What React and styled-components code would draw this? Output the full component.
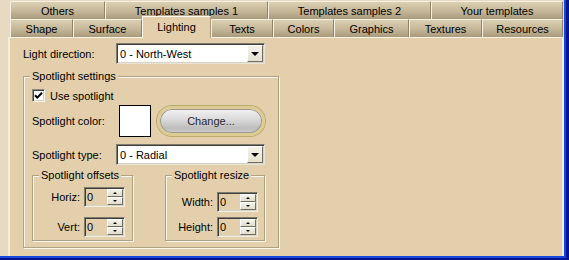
import React from 'react';
import styled, { createGlobalStyle } from 'styled-components';

const PANEL = '#E3CFAB';

const GlobalStyle = createGlobalStyle`
  html, body {
    margin: 0;
    padding: 0;
    background: #E7DAC0;
  }
  body {
    font-family: "Liberation Sans", Arial, sans-serif;
    font-size: 11px;
    color: #000;
  }
`;

const topTabs = [
    { label: 'Others', w: 95 },
    { label: 'Templates samples 1', w: 163 },
    { label: 'Templates samples 2', w: 163 },
    { label: 'Your templates', w: 132 },
];

const bottomTabs = [
    { label: 'Shape', w: 63 },
    { label: 'Surface', w: 69 },
    { label: 'Lighting', w: 69, active: true },
    { label: 'Texts', w: 62 },
    { label: 'Colors', w: 61 },
    { label: 'Graphics', w: 75 },
    { label: 'Textures', w: 73 },
    { label: 'Resources', w: 81 },
];

function Combo({ value }) {
    return (
        <ComboBox>
            <ComboText>{value}</ComboText>
            <DropButton><Arrow $down /></DropButton>
        </ComboBox>
    );
}

function Spin({ label, value }) {
    return (
        <>
            <SpinLabel>{label}</SpinLabel>
            <SpinBox>
                <SpinText>{value}</SpinText>
                <SpinButtons>
                    <SpinButton><SmallArrow /></SpinButton>
                    <SpinButton><SmallArrow $down /></SpinButton>
                </SpinButtons>
            </SpinBox>
        </>
    );
}

export default function App() {
    return (
        <>
            <GlobalStyle />
            <Frame>
                <Client>
                    <TabRow>
                        {topTabs.map(t => <Tab key={t.label} $w={t.w}>{t.label}</Tab>)}
                    </TabRow>
                    <TabRow>
                        {bottomTabs.map(t => <Tab key={t.label} $w={t.w} $active={t.active}>{t.label}</Tab>)}
                    </TabRow>
                    <Panel>
                        <FieldRow>
                            <Label $w={93}>Light direction:</Label>
                            <Combo value="0 - North-West" />
                        </FieldRow>

                        <GroupBox $w={256} $h={172} $top={12}>
                            <GroupTitle>Spotlight settings</GroupTitle>
                            <CheckRow>
                                <CheckBox>
                                    <svg width="9" height="9" viewBox="0 0 9 9">
                                        <path d="M1 4.2 L3.3 6.6 L8 1.8" fill="none" stroke="#000" strokeWidth="2" />
                                    </svg>
                                </CheckBox>
                                <span>Use spotlight</span>
                            </CheckRow>
                            <ColorRow>
                                <Label $w={87}>Spotlight color:</Label>
                                <Swatch />
                                <PillButton>Change...</PillButton>
                            </ColorRow>
                            <FieldRow $top={7}>
                                <Label $w={84}>Spotlight type:</Label>
                                <Combo value="0 - Radial" />
                            </FieldRow>
                            <SubRow>
                                <GroupBox $w={101} $h={66}>
                                    <GroupTitle>Spotlight offsets</GroupTitle>
                                    <SpinRow $top={5} $right={7}><Spin label="Horiz:" value="0" /></SpinRow>
                                    <SpinRow $top={10} $right={7}><Spin label="Vert:" value="0" /></SpinRow>
                                </GroupBox>
                                <GroupBox $w={100} $h={66}>
                                    <GroupTitle>Spotlight resize</GroupTitle>
                                    <SpinRow $top={10} $right={6}><Spin label="Width:" value="0" /></SpinRow>
                                    <SpinRow $top={5} $right={6}><Spin label="Height:" value="0" /></SpinRow>
                                </GroupBox>
                            </SubRow>
                        </GroupBox>
                    </Panel>
                </Client>
            </Frame>
        </>
    );
}

const Frame = styled.div`
    width: 569px;
    height: 260px;
    box-sizing: border-box;
    padding: 0 5px 4px 0;
    background: #1246DE;
    box-shadow: inset -3px -2px 0 #00148F;
    display: flex;
`;

const Client = styled.div`
    flex: 1;
    display: flex;
    flex-direction: column;
    padding: 1px 0 0 8px;
    background: #E7DAC0;
    overflow: hidden;
`;

const TabRow = styled.div`
    display: flex;
    height: 18px;
    padding-left: 2px;
`;

const Tab = styled.div`
    flex: 0 0 ${p => p.$w}px;
    box-sizing: border-box;
    display: flex;
    align-items: center;
    justify-content: center;
    white-space: nowrap;
    border-top: 1px solid #F6F0E2;
    border-left: 1px solid #F6F0E2;
    border-right: 1px solid #918569;
    background: ${p => p.$active ? PANEL : 'linear-gradient(#DCD0B3, #C4B697 55%, #A89A7C)'};
    ${p => p.$active && `
        position: relative;
        z-index: 2;
        height: 22px;
        margin-top: -3px;
        padding-bottom: 1px;
        border-top-color: #FFFBF0;
        border-left-color: #FFFBF0;
        border-right-color: #A89B7D;
    `}
`;

const Panel = styled.div`
    flex: 1;
    display: flex;
    flex-direction: column;
    align-items: flex-start;
    background: ${PANEL};
    border-top: 1px solid #F8F3E7;
    border-left: 2px solid #F4EEE0;
    border-right: 2px solid #F1EADB;
    padding: 5px 0 0 13px;
`;

const FieldRow = styled.div`
    display: flex;
    align-items: center;
    height: 21px;
    margin-top: ${p => p.$top || 0}px;
`;

const Label = styled.span`
    width: ${p => p.$w}px;
    flex: 0 0 auto;
    white-space: nowrap;
`;

const ComboBox = styled.div`
    width: 149px;
    height: 21px;
    box-sizing: border-box;
    display: flex;
    align-items: stretch;
    background: #fff;
    border: 1px solid;
    border-color: #7E7B6C #E8E3D4 #E8E3D4 #7E7B6C;
    box-shadow: inset 1px 1px 0 #3F3F3F, inset -1px -1px 0 #D6D2C4;
`;

const ComboText = styled.span`
    flex: 1;
    display: flex;
    align-items: center;
    padding-left: 3px;
`;

const DropButton = styled.div`
    width: 16px;
    margin: 1px 1px 1px 0;
    box-sizing: border-box;
    display: flex;
    align-items: center;
    justify-content: center;
    background: linear-gradient(#F4F2EA, #E6E2D2);
    border: 1px solid;
    border-color: #FFFFFF #716F64 #716F64 #FFFFFF;
`;

const Arrow = styled.span`
    width: 0;
    height: 0;
    border-left: 4px solid transparent;
    border-right: 4px solid transparent;
    border-top: 4px solid #000;
`;

const GroupBox = styled.div`
    width: ${p => p.$w}px;
    height: ${p => p.$h}px;
    box-sizing: border-box;
    flex: 0 0 auto;
    display: flex;
    flex-direction: column;
    margin-top: ${p => p.$top || 0}px;
    padding-left: 8px;
    border: 1px solid #AFA283;
    box-shadow: 1px 1px 0 #FBF7EE, inset 1px 1px 0 #FBF7EE;
`;

const GroupTitle = styled.span`
    align-self: flex-start;
    height: 13px;
    line-height: 13px;
    margin: -7px 0 0 -2px;
    padding: 0 2px;
    background: ${PANEL};
    white-space: nowrap;
`;

const CheckRow = styled.label`
    display: flex;
    align-items: center;
    gap: 5px;
    height: 15px;
    margin-top: 5px;
`;

const CheckBox = styled.span`
    width: 13px;
    height: 13px;
    box-sizing: border-box;
    display: flex;
    align-items: center;
    justify-content: center;
    background: #fff;
    border: 1px solid;
    border-color: #8D8A7C #F5F2EA #F5F2EA #8D8A7C;
    box-shadow: inset 1px 1px 0 #404040, inset -1px -1px 0 #D8D4C8;
`;

const ColorRow = styled.div`
    display: flex;
    align-items: center;
    margin-top: 2px;
    height: 32px;
`;

const Swatch = styled.span`
    width: 32px;
    height: 32px;
    box-sizing: border-box;
    background: #fff;
    border: 1px solid #000;
`;

const PillButton = styled.button`
    width: 108px;
    height: 30px;
    margin-left: 6px;
    box-sizing: border-box;
    border-radius: 15px;
    border: 3px solid #DCCC94;
    box-shadow: 0 0 0 1px #BCA96E, inset 0 0 0 1px #9A9890;
    background: linear-gradient(#F3F3F3, #D9D9D9 45%, #BDBDBD 80%, #CFCFCF);
    font-family: "Liberation Sans", Arial, sans-serif;
    font-size: 11px;
    color: #2A2A2A;
    padding: 0;
    cursor: pointer;
`;

const SubRow = styled.div`
    display: flex;
    gap: 32px;
    margin-top: 10px;
    margin-left: -8px;
    padding-left: 8px;
`;

const SpinRow = styled.div`
    display: flex;
    align-items: center;
    justify-content: flex-end;
    gap: 4px;
    height: 20px;
    margin-top: ${p => p.$top}px;
    padding-right: ${p => p.$right}px;
`;

const SpinLabel = styled.span`
    white-space: nowrap;
`;

const SpinBox = styled.div`
    width: 41px;
    height: 20px;
    box-sizing: border-box;
    display: flex;
    background: ${PANEL};
    border: 1px solid;
    border-color: #7E7B6C #F3EEE2 #F3EEE2 #7E7B6C;
    box-shadow: inset 1px 1px 0 #3F3F3F, inset -1px -1px 0 #D6D2C4;
`;

const SpinText = styled.span`
    flex: 1;
    display: flex;
    align-items: center;
    padding-left: 2px;
`;

const SpinButtons = styled.div`
    width: 16px;
    display: flex;
    flex-direction: column;
    margin: 1px 1px 1px 0;
`;

const SpinButton = styled.div`
    flex: 1;
    box-sizing: border-box;
    display: flex;
    align-items: center;
    justify-content: center;
    background: linear-gradient(#F4F2EA, #E2DDCC);
    border: 1px solid;
    border-color: #FFFFFF #716F64 #716F64 #FFFFFF;
`;

const SmallArrow = styled.span`
    width: 0;
    height: 0;
    border-left: 2px solid transparent;
    border-right: 2px solid transparent;
    ${p => p.$down ? 'border-top: 2px solid #000;' : 'border-bottom: 2px solid #000;'}
`;
